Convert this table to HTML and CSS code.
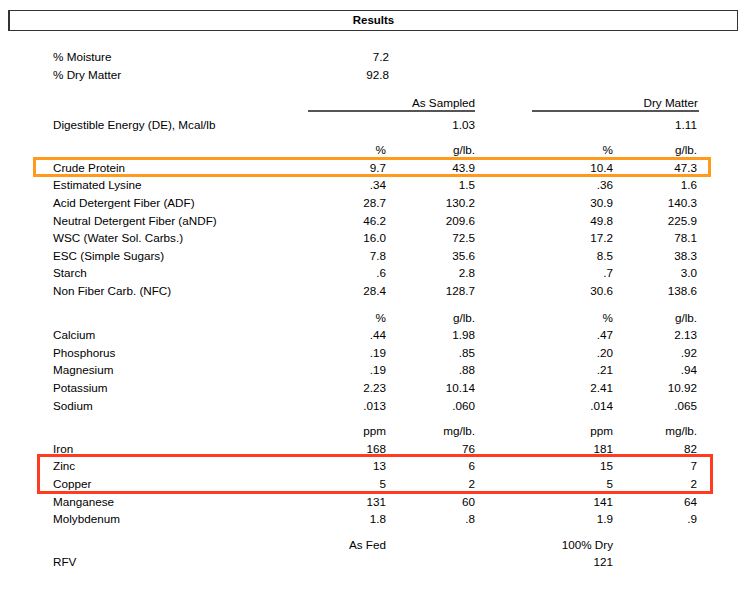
FILE: index.html
```html
<!DOCTYPE html>
<html>
<head>
<meta charset="utf-8">
<link rel="stylesheet" href="styles.css">
</head>
<body>
<div class="title">Results</div>
<div class="content">
  <div class="block moist">
    <div class="row wide"><span>% Moisture</span><span class="n">7.2</span></div>
    <div class="row wide"><span>% Dry Matter</span><span class="n">92.8</span></div>
  </div>
  <div class="heads">
    <span class="head h1">As Sampled</span>
    <span class="head h2">Dry Matter</span>
  </div>
  <div class="row de"><span>Digestible Energy (DE), Mcal/lb</span><span></span><span class="n">1.03</span><span></span><span class="n">1.11</span></div>

  <div class="block units-first">
    <div class="row"><span></span><span class="n">%</span><span class="n">g/lb.</span><span class="n">%</span><span class="n">g/lb.</span></div>
    <div class="hl orange">
      <div class="row"><span>Crude Protein</span><span class="n">9.7</span><span class="n">43.9</span><span class="n">10.4</span><span class="n">47.3</span></div>
    </div>
    <div class="row"><span>Estimated Lysine</span><span class="n">.34</span><span class="n">1.5</span><span class="n">.36</span><span class="n">1.6</span></div>
    <div class="row"><span>Acid Detergent Fiber (ADF)</span><span class="n">28.7</span><span class="n">130.2</span><span class="n">30.9</span><span class="n">140.3</span></div>
    <div class="row"><span>Neutral Detergent Fiber (aNDF)</span><span class="n">46.2</span><span class="n">209.6</span><span class="n">49.8</span><span class="n">225.9</span></div>
    <div class="row"><span>WSC (Water Sol. Carbs.)</span><span class="n">16.0</span><span class="n">72.5</span><span class="n">17.2</span><span class="n">78.1</span></div>
    <div class="row"><span>ESC (Simple Sugars)</span><span class="n">7.8</span><span class="n">35.6</span><span class="n">8.5</span><span class="n">38.3</span></div>
    <div class="row"><span>Starch</span><span class="n">.6</span><span class="n">2.8</span><span class="n">.7</span><span class="n">3.0</span></div>
    <div class="row"><span>Non Fiber Carb. (NFC)</span><span class="n">28.4</span><span class="n">128.7</span><span class="n">30.6</span><span class="n">138.6</span></div>
  </div>

  <div class="block section">
    <div class="row"><span></span><span class="n">%</span><span class="n">g/lb.</span><span class="n">%</span><span class="n">g/lb.</span></div>
    <div class="row"><span>Calcium</span><span class="n">.44</span><span class="n">1.98</span><span class="n">.47</span><span class="n">2.13</span></div>
    <div class="row"><span>Phosphorus</span><span class="n">.19</span><span class="n">.85</span><span class="n">.20</span><span class="n">.92</span></div>
    <div class="row"><span>Magnesium</span><span class="n">.19</span><span class="n">.88</span><span class="n">.21</span><span class="n">.94</span></div>
    <div class="row"><span>Potassium</span><span class="n">2.23</span><span class="n">10.14</span><span class="n">2.41</span><span class="n">10.92</span></div>
    <div class="row"><span>Sodium</span><span class="n">.013</span><span class="n">.060</span><span class="n">.014</span><span class="n">.065</span></div>
  </div>

  <div class="block section-b">
    <div class="row"><span></span><span class="n">ppm</span><span class="n">mg/lb.</span><span class="n">ppm</span><span class="n">mg/lb.</span></div>
    <div class="row"><span>Iron</span><span class="n">168</span><span class="n">76</span><span class="n">181</span><span class="n">82</span></div>
    <div class="hl red">
      <div class="row"><span>Zinc</span><span class="n">13</span><span class="n">6</span><span class="n">15</span><span class="n">7</span></div>
      <div class="row"><span>Copper</span><span class="n">5</span><span class="n">2</span><span class="n">5</span><span class="n">2</span></div>
    </div>
    <div class="row"><span>Manganese</span><span class="n">131</span><span class="n">60</span><span class="n">141</span><span class="n">64</span></div>
    <div class="row"><span>Molybdenum</span><span class="n">1.8</span><span class="n">.8</span><span class="n">1.9</span><span class="n">.9</span></div>
  </div>

  <div class="block section-b">
    <div class="row"><span></span><span class="n">As Fed</span><span></span><span class="n">100% Dry</span><span></span></div>
    <div class="row"><span>RFV</span><span></span><span></span><span class="n">121</span><span></span></div>
  </div>
</div>
</body>
</html>
```
FILE: styles.css
```css
html, body {
  margin: 0;
  padding: 0;
  background: #fff;
}
body {
  font-family: "Liberation Sans", Arial, sans-serif;
  font-size: 11.7px;
  color: #000;
}
.title {
  margin: 10px 0 0 8px;
  width: 727px;
  height: 19px;
  line-height: 19px;
  border: 1px solid #333;
  border-left-width: 2px;
  text-align: center;
  font-weight: bold;
  font-size: 11.5px;
}
.content {
  padding-left: 53px;
}
.row {
  display: grid;
  grid-template-columns: 273px 60px 89px 138px 84px;
  width: 644px;
  height: 17.6px;
  line-height: 17.6px;
  white-space: nowrap;
}
.row.wide {
  grid-template-columns: 276px 60px;
}
.n {
  text-align: right;
}
.moist {
  margin-top: 17px;
}
.heads {
  display: grid;
  grid-template-columns: 255px 167px 57px 167px;
  margin-top: 13px;
}
.head {
  line-height: 14px;
  text-align: right;
  border-bottom: 2px solid #555;
}
.h1 { grid-column: 2; }
.h2 { grid-column: 4; padding-right: 1px; }
.de {
  margin-top: 4px;
}
.units-first {
  margin-top: 7.5px;
}
.section {
  margin-top: 9px;
}
.section-b {
  margin-top: 8px;
}
.hl {
  position: relative;
  width: 644px;
}
.hl::after {
  content: "";
  position: absolute;
  border: 3px solid;
  pointer-events: none;
}
.orange::after {
  border-color: #ff9a1c;
  top: -2px;
  bottom: -1px;
  left: -20px;
  right: -14px;
}
.red::after {
  border-color: #ff3b22;
  top: -3px;
  bottom: -1px;
  left: -16px;
  right: -16px;
}
```
